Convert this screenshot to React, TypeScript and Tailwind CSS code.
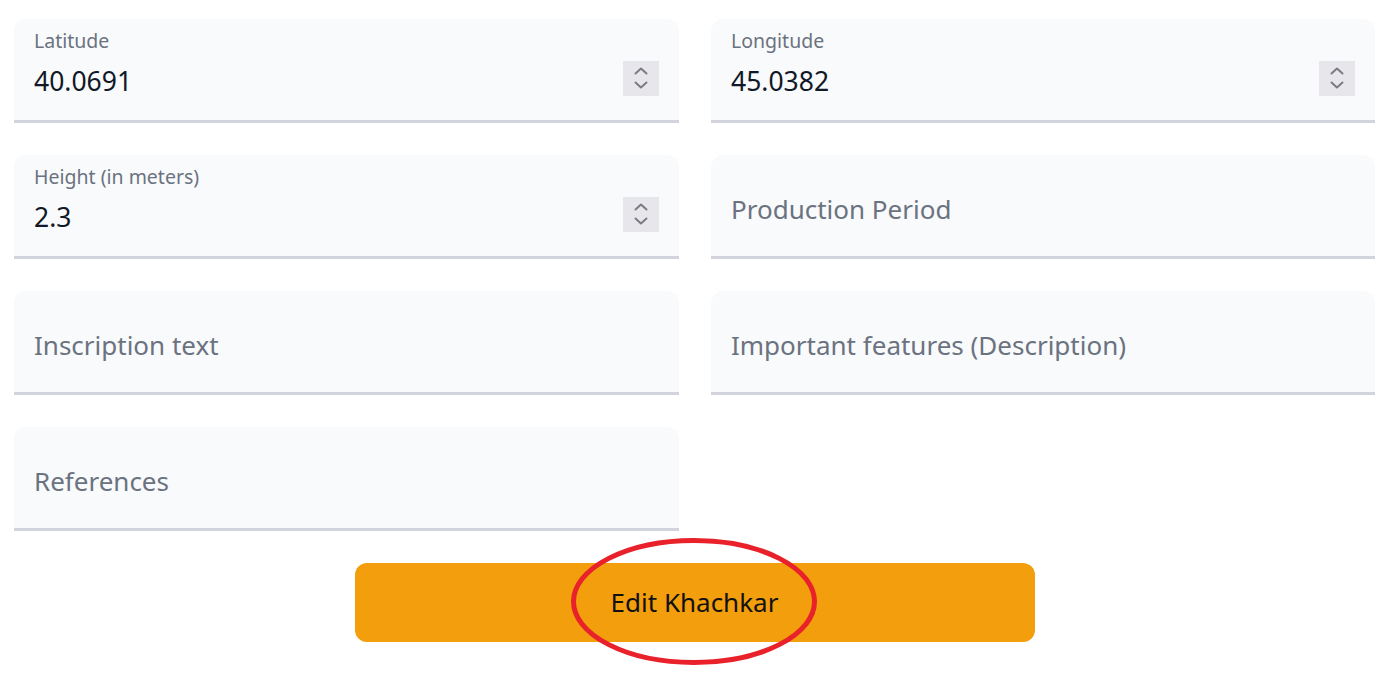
import React from "react";

type FieldProps = {
  label?: string;
  value?: string;
  placeholder?: string;
  spinner?: boolean;
};

function Spinner() {
  return (
    <div className="-mt-[6px] flex h-[35px] w-[36px] flex-col items-center justify-center gap-[6px] bg-[#e7e7eb]">
      <svg width="14" height="8" viewBox="0 0 14 8" fill="none">
        <path d="M1.5 6.5L7 1.5L12.5 6.5" stroke="#7b7b85" strokeWidth="2" strokeLinecap="round" strokeLinejoin="round" />
      </svg>
      <svg width="14" height="8" viewBox="0 0 14 8" fill="none">
        <path d="M1.5 1.5L7 6.5L12.5 1.5" stroke="#7b7b85" strokeWidth="2" strokeLinecap="round" strokeLinejoin="round" />
      </svg>
    </div>
  );
}

function Field({ label, value, placeholder, spinner }: FieldProps) {
  return (
    <div className="h-[104px] rounded-t-[12px] border-b-[3px] border-[#d1d5db] bg-[#f9fafb] px-[20px]">
      {label ? (
        <>
          <div className="pt-[10px] text-[19.5px] leading-[24px] text-[#6b7280]">{label}</div>
          <div className="mt-[11px] flex items-center justify-between">
            <span className="text-[26.5px] leading-[34px] text-[#111827]">{value}</span>
            {spinner && <Spinner />}
          </div>
        </>
      ) : (
        <div className="pt-[37px] text-[26px] leading-[34px] text-[#6b7280]">{placeholder}</div>
      )}
    </div>
  );
}

export default function App() {
  return (
    <div className="min-h-screen bg-white pb-10 pl-[14px] pr-[22px] pt-[19px] font-['Noto_Sans',sans-serif]">
      <div className="grid grid-cols-[665px_664px] gap-x-[32px] gap-y-[32px]">
        <Field label="Latitude" value="40.0691" spinner />
        <Field label="Longitude" value="45.0382" spinner />
        <Field label="Height (in meters)" value="2.3" spinner />
        <Field placeholder="Production Period" />
        <Field placeholder="Inscription text" />
        <Field placeholder="Important features (Description)" />
        <Field placeholder="References" />
      </div>
      <div className="mt-[32px] flex justify-center">
        <div className="relative">
          <button className="h-[79px] w-[680px] rounded-[12px] bg-[#f39e0c] text-[26px] text-[#111111]">
            Edit Khachkar
          </button>
          <svg
            className="pointer-events-none absolute left-[216px] top-[-25px]"
            width="246"
            height="127"
            viewBox="0 0 246 127"
            fill="none"
          >
            <ellipse cx="123" cy="63.5" rx="120.5" ry="61" stroke="#e8212a" strokeWidth="5" />
          </svg>
        </div>
      </div>
    </div>
  );
}
